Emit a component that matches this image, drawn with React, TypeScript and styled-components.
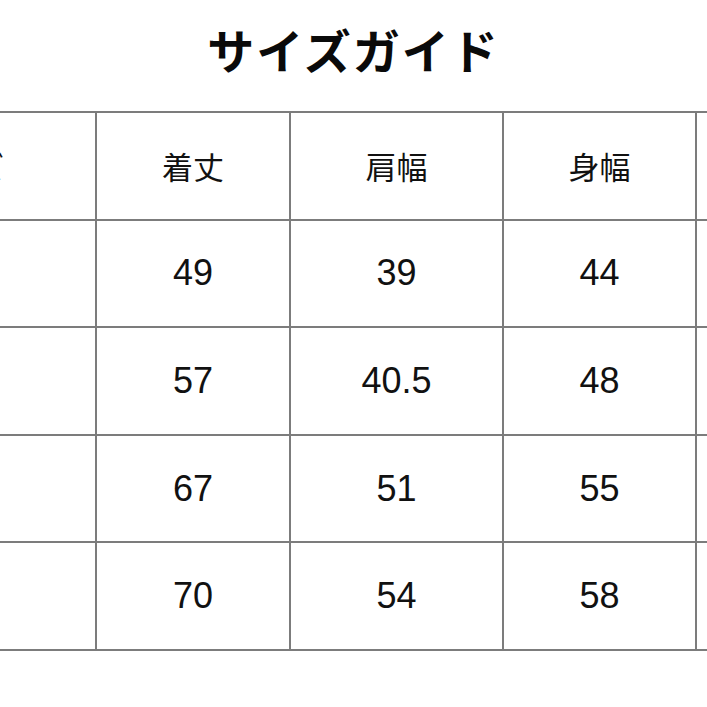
import styled, { createGlobalStyle } from 'styled-components';

const GlobalStyle = createGlobalStyle`
  html, body {
    margin: 0;
    padding: 0;
    background: #ffffff;
  }
  body {
    width: 707px;
    height: 707px;
    overflow: hidden;
  }
`;

const headers = ['サイズ', '着丈', '肩幅', '身幅', '袖丈'];

const rows = [
  ['S', '49', '39', '44', '19'],
  ['M', '57', '40.5', '48', '20'],
  ['L', '67', '51', '55', '23'],
  ['XL', '70', '54', '58', '24'],
];

const App = () => {
  return (
    <Page>
      <GlobalStyle />
      <Title>サイズガイド</Title>
      <TableClip>
        <Table>
          {headers.map((h) => (
            <HeadCell key={h}>{h}</HeadCell>
          ))}
          {rows.map((row) =>
            row.map((value, i) => <Cell key={row[0] + i}>{value}</Cell>),
          )}
        </Table>
      </TableClip>
    </Page>
  );
};

export default App;

const Page = styled.div`
  width: 707px;
  height: 707px;
  background: #ffffff;
  display: flex;
  flex-direction: column;
`;

const Title = styled.h1`
  margin: 0;
  height: 111px;
  display: flex;
  align-items: center;
  justify-content: center;
  padding-bottom: 14px;
  box-sizing: border-box;
  font-family: 'Noto Sans CJK JP', sans-serif;
  font-size: 47px;
  font-weight: 700;
  letter-spacing: 2px;
  color: #0a0a0a;
`;

const TableClip = styled.div`
  width: 707px;
  overflow: hidden;
`;

const Table = styled.div`
  display: grid;
  grid-template-columns: 276px 194px 213px 193px 194px;
  grid-auto-rows: 107.6px;
  width: max-content;
  margin-left: -179px;
  border-top: 2px solid #7c7c7c;
`;

const Cell = styled.div`
  box-sizing: border-box;
  display: flex;
  align-items: center;
  justify-content: center;
  border-right: 2px solid #7c7c7c;
  border-bottom: 2px solid #7c7c7c;
  font-family: 'Liberation Sans', Arial, sans-serif;
  font-size: 36px;
  color: #111111;
`;

const HeadCell = styled(Cell)`
  font-family: 'Noto Sans CJK JP', sans-serif;
  font-size: 31px;
  font-weight: 400;
`;
